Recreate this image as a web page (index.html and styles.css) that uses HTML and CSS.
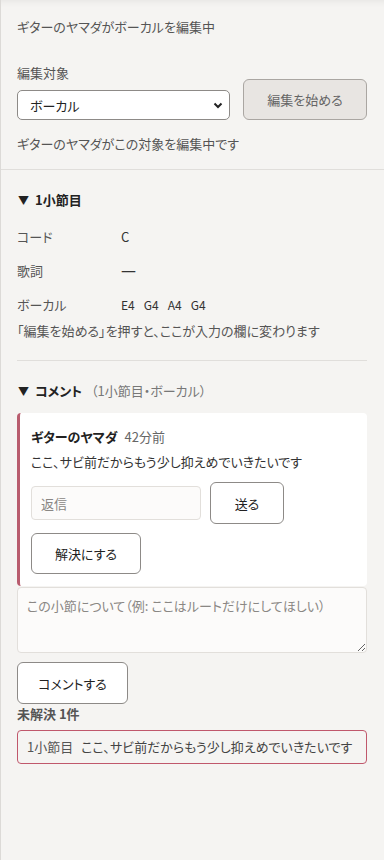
FILE: index.html
```html
<!DOCTYPE html>
<html lang="ja">
<head>
    <meta charset="UTF-8">
    <meta name="viewport" content="width=device-width, initial-scale=1.0">
    <title>小節の編集</title>
    <link rel="stylesheet" href="styles.css">
</head>
<body>
    <aside class="panel">
        <section class="edit-box">
            <p class="status">ギターのヤマダがボーカルを編集中</p>
            <div class="target-row">
                <div class="target-field">
                    <label for="target">編集対象</label>
                    <div class="select-wrap">
                        <select id="target">
                            <option>ボーカル</option>
                            <option>コード</option>
                            <option>歌詞</option>
                        </select>
                        <svg class="chevron" width="10" height="7" viewBox="0 0 10 7"><path d="M1.5 1.5 L5 5 L8.5 1.5" fill="none" stroke="#222" stroke-width="2"/></svg>
                    </div>
                </div>
                <button class="start-btn" disabled>編集を始める</button>
            </div>
            <p class="status note">ギターのヤマダがこの対象を編集中です</p>
        </section>

        <section class="measure">
            <h2 class="toggle"><span class="arrow">▼</span>1小節目</h2>
            <dl class="fields">
                <div class="field"><dt>コード</dt><dd>C</dd></div>
                <div class="field"><dt>歌詞</dt><dd class="dash">—</dd></div>
                <div class="field"><dt>ボーカル</dt><dd class="notes"><span>E4</span><span>G4</span><span>A4</span><span>G4</span></dd></div>
            </dl>
            <p class="hint">「編集を始める」を押すと、ここが入力の欄に変わります</p>

            <div class="comments">
                <h2 class="toggle"><span class="arrow">▼</span>コメント <span class="scope">（1小節目・ボーカル）</span></h2>

                <div class="comment-card">
                    <div class="comment-head"><strong>ギターのヤマダ</strong><span class="time">42分前</span></div>
                    <p class="comment-body">ここ、サビ前だからもう少し抑えめでいきたいです</p>
                    <div class="reply-row">
                        <input type="text" class="reply-input" placeholder="返信">
                        <button class="btn send-btn">送る</button>
                    </div>
                    <button class="btn resolve-btn">解決にする</button>
                </div>

                <textarea class="new-comment" placeholder="この小節について（例: ここはルートだけにしてほしい）"></textarea>
                <button class="btn post-btn">コメントする</button>

                <div class="unresolved">
                    <h3>未解決 1件</h3>
                    <div class="unresolved-item"><span class="where">1小節目</span>ここ、サビ前だからもう少し抑えめでいきたいです</div>
                </div>
            </div>
        </section>
    </aside>
</body>
</html>
```

FILE: styles.css
```css
* {
    box-sizing: border-box;
}

body {
    margin: 0;
    background: #f5f4f2;
    font-family: "Noto Sans CJK JP", "Noto Sans", sans-serif;
    font-size: 13px;
    line-height: 20px;
    color: #333;
    font-feature-settings: "palt";
}

.panel {
    min-height: 860px;
    border-left: 1px solid #dcdad7;
    box-shadow: inset 0 8px 6px -6px rgba(0, 0, 0, 0.06);
}

p, h2, h3, dl, dd {
    margin: 0;
}

.edit-box {
    padding: 17px 17px 15px 16px;
    border-bottom: 1px solid #e0dedb;
}

.status {
    color: #555;
}

.target-row {
    display: flex;
    align-items: flex-end;
    gap: 13px;
    margin-top: 26px;
}

.target-field {
    width: 213px;
}

.target-field label {
    display: block;
    color: #555;
    margin-bottom: 7px;
}

.select-wrap {
    position: relative;
}

.select-wrap select {
    width: 100%;
    height: 30px;
    appearance: none;
    background: #fff;
    border: 1px solid #8d8a87;
    border-radius: 5px;
    padding: 0 12px;
    font-family: inherit;
    font-size: 13px;
    font-feature-settings: "palt";
    color: #222;
}

.chevron {
    position: absolute;
    right: 7px;
    top: 12px;
    pointer-events: none;
}

.start-btn {
    width: 124px;
    height: 41px;
    background: #e8e5e2;
    border: 1px solid #aaa6a2;
    border-radius: 6px;
    color: #666;
    font-family: inherit;
    font-size: 13px;
    font-feature-settings: "palt";
}

.note {
    margin-top: 14px;
}

.measure {
    padding: 20px 17px 0 16px;
}

.toggle {
    font-size: 13px;
    font-weight: bold;
    color: #222;
}

.arrow {
    display: inline-block;
    width: 17px;
    font-size: 11px;
    margin-left: 1px;
}

.fields {
    margin-top: 17px;
    display: flex;
    flex-direction: column;
    gap: 14px;
}

.field {
    display: flex;
}

.field dt {
    width: 104px;
    color: #555;
}

.field dd {
    color: #333;
}

.dash {
    font-family: "DejaVu Sans", sans-serif;
    font-size: 15px;
    font-feature-settings: normal;
}

.notes {
    display: flex;
    gap: 9px;
    font-size: 12px;
}

.hint {
    margin-top: 6px;
    color: #555;
}

.comments {
    margin-top: 19px;
    padding-top: 20px;
    border-top: 1px solid #e0dedb;
}

.scope {
    font-weight: normal;
    color: #777;
    margin-left: 6px;
}

.comment-card {
    margin-top: 12px;
    background: #fff;
    border-left: 3px solid #b85c6e;
    border-radius: 4px;
    padding: 14px 12px 12px 11px;
}

.comment-head strong {
    color: #222;
}

.time {
    color: #666;
    margin-left: 7px;
}

.comment-body {
    margin-top: 5px;
    color: #333;
}

.reply-row {
    display: flex;
    align-items: center;
    gap: 9px;
    margin-top: 10px;
}

.reply-input {
    width: 170px;
    height: 34px;
    background: #fcfbfa;
    border: 1px solid #e2dfdb;
    border-radius: 4px;
    padding: 0 9px;
    font-family: inherit;
    font-size: 13px;
    font-feature-settings: "palt";
}

.reply-input::placeholder,
.new-comment::placeholder {
    color: #8a8784;
}

.btn {
    height: 42px;
    background: #fff;
    border: 1px solid #8d8a87;
    border-radius: 6px;
    color: #222;
    font-family: inherit;
    font-size: 13px;
    font-feature-settings: "palt";
    cursor: pointer;
}

.send-btn {
    width: 74px;
}

.resolve-btn {
    display: block;
    width: 110px;
    height: 41px;
    margin-top: 9px;
}

.new-comment {
    display: block;
    width: 100%;
    height: 66px;
    margin-top: 1px;
    background: #fcfbfa;
    border: 1px solid #e2dfdb;
    border-radius: 4px;
    padding: 8px 9px;
    font-family: inherit;
    font-size: 13px;
    line-height: 20px;
    font-feature-settings: "palt";
}

.post-btn {
    display: block;
    width: 111px;
    margin-top: 9px;
}

.unresolved h3 {
    font-size: 13px;
    font-weight: bold;
    color: #555;
}

.unresolved-item {
    margin-top: 6px;
    height: 34px;
    display: flex;
    align-items: center;
    padding: 0 9px;
    border: 1px solid #c0586c;
    border-radius: 4px;
    color: #444;
}

.where {
    color: #555;
    margin-right: 8px;
}
```
